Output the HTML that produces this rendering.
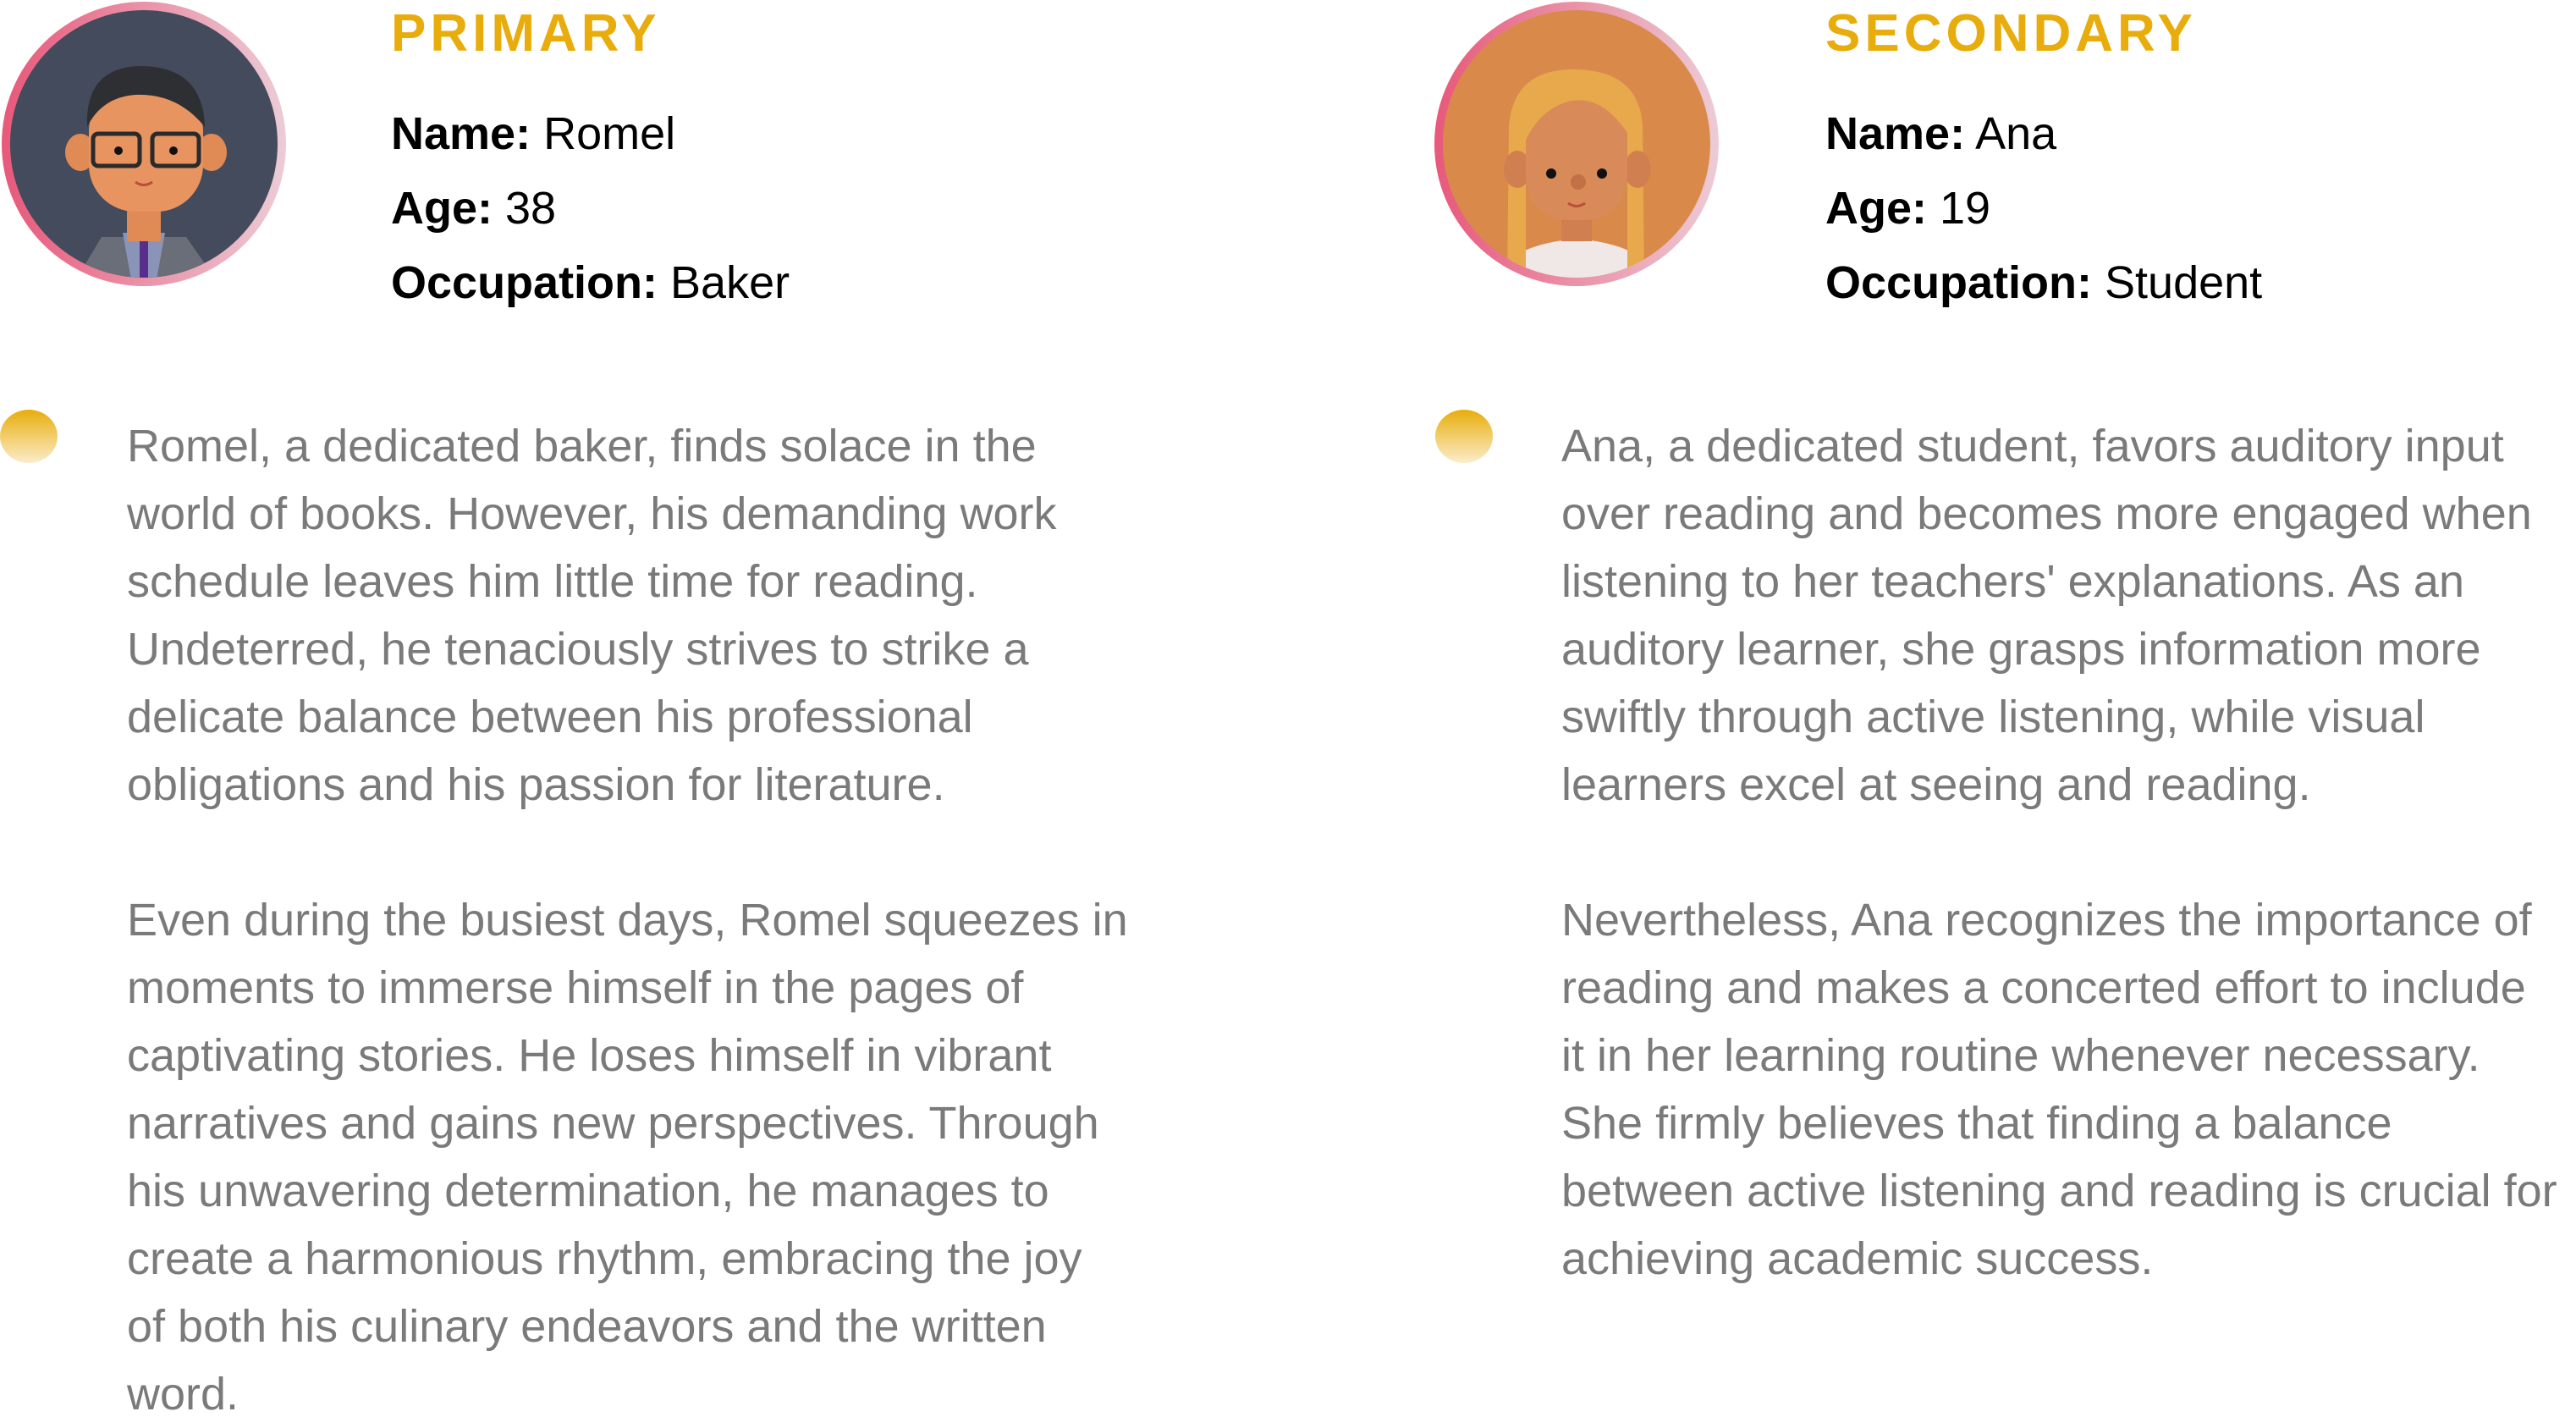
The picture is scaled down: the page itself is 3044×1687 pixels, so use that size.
<!DOCTYPE html>
<html><head><meta charset="utf-8"><style>
body{margin:0;width:3044px;height:1684px;background:#fff;position:relative;overflow:hidden;font-family:"Liberation Sans",sans-serif}
.h{position:absolute;font-size:62px;font-weight:bold;color:#e8ad0c;letter-spacing:5px;line-height:60px}
.info{position:absolute;font-size:54px;line-height:88px;color:#000;letter-spacing:0;white-space:nowrap}
.info b{font-weight:bold}
.body{position:absolute;font-size:54px;line-height:80px;color:#7a7a7a;letter-spacing:0;white-space:nowrap}
.dot{position:absolute;width:68px;height:63px;border-radius:50%;background:linear-gradient(#e8ad0c,#fbeccb)}
svg{position:absolute}
</style></head><body>

<svg style="left:0;top:0" width="340" height="340" viewBox="0 0 340 340">
<defs><linearGradient id="r1" x1="0" y1="0" x2="1" y2="0"><stop offset="0" stop-color="#e8587a"/><stop offset="1" stop-color="#ecccd6"/></linearGradient>
<clipPath id="c1"><circle cx="170" cy="170" r="158"/></clipPath></defs>
<circle cx="170" cy="170" r="168" fill="url(#r1)"/>
<circle cx="170" cy="170" r="158" fill="#434b5c"/>
<g clip-path="url(#c1)">
<path d="M90 330 L120 280 L220 280 L255 330 Z" fill="#6a6e78"/>
<path d="M145 275 L195 275 L185 330 L155 330 Z" fill="#8a94b8"/>
<rect x="165" y="285" width="10" height="45" fill="#5a2d8a"/>
<rect x="150" y="230" width="40" height="55" fill="#e08a55"/>
<ellipse cx="95" cy="180" rx="18" ry="22" fill="#e08a55"/>
<ellipse cx="250" cy="180" rx="18" ry="22" fill="#e08a55"/>
<rect x="105" y="100" width="135" height="150" rx="55" fill="#e89460"/>
<path d="M103 150 Q100 80 165 78 Q240 78 242 150 Q210 110 160 112 Q120 115 103 150Z" fill="#2d2f33"/>
<rect x="110" y="158" width="55" height="38" rx="6" fill="none" stroke="#2a2a2a" stroke-width="5"/>
<rect x="180" y="158" width="55" height="38" rx="6" fill="none" stroke="#2a2a2a" stroke-width="5"/>
<circle cx="140" cy="178" r="5" fill="#111"/><circle cx="205" cy="178" r="5" fill="#111"/>
<path d="M160 215 Q170 222 180 215" stroke="#b8503a" stroke-width="3" fill="none"/>
</g></svg>

<svg style="left:1693px;top:0" width="340" height="340" viewBox="0 0 340 340">
<defs><clipPath id="c2"><circle cx="170" cy="170" r="158"/></clipPath></defs>
<circle cx="170" cy="170" r="168" fill="url(#r1)"/>
<circle cx="170" cy="170" r="158" fill="#d98a4a"/>
<g clip-path="url(#c2)">
<path d="M80 330 Q85 290 170 282 Q255 290 260 330Z" fill="#efe8e6"/>
<path d="M90 150 Q95 80 170 82 Q245 84 248 150 L250 330 L230 330 L230 200 L110 200 L110 330 L88 330Z" fill="#e8a84c"/>
<rect x="152" y="230" width="36" height="55" fill="#d08050"/>
<ellipse cx="100" cy="200" rx="16" ry="22" fill="#d08050"/>
<ellipse cx="242" cy="200" rx="16" ry="22" fill="#d08050"/>
<rect x="110" y="110" width="120" height="150" rx="50" fill="#d88a58"/>
<path d="M108 170 Q110 95 175 92 Q232 95 232 160 Q200 110 160 120 Q125 130 108 170Z" fill="#e8a84c"/>
<circle cx="140" cy="205" r="6" fill="#111"/><circle cx="200" cy="205" r="6" fill="#111"/>
<circle cx="172" cy="215" r="9" fill="#c27045"/>
<path d="M160 240 Q170 247 180 240" stroke="#b8503a" stroke-width="3" fill="none"/>
</g></svg>

<div class="h" style="left:462px;top:10px">PRIMARY</div>
<div class="info" style="left:462px;top:114px"><b>Name:</b> Romel<br><b>Age:</b> 38<br><b>Occupation:</b> Baker</div>

<div class="h" style="left:2157px;top:10px">SECONDARY</div>
<div class="info" style="left:2157px;top:114px"><b>Name:</b> Ana<br><b>Age:</b> 19<br><b>Occupation:</b> Student</div>

<div class="dot" style="left:0;top:484px"></div>
<div class="dot" style="left:1696px;top:484px"></div>

<div class="body" style="left:150px;top:487px">Romel, a dedicated baker, finds solace in the<br>world of books. However, his demanding work<br>schedule leaves him little time for reading.<br>Undeterred, he tenaciously strives to strike a<br>delicate balance between his professional<br>obligations and his passion for literature.<br><br>Even during the busiest days, Romel squeezes in<br>moments to immerse himself in the pages of<br>captivating stories. He loses himself in vibrant<br>narratives and gains new perspectives. Through<br>his unwavering determination, he manages to<br>create a harmonious rhythm, embracing the joy<br>of both his culinary endeavors and the written<br>word.</div>

<div class="body" style="left:1845px;top:487px">Ana, a dedicated student, favors auditory input<br>over reading and becomes more engaged when<br>listening to her teachers' explanations. As an<br>auditory learner, she grasps information more<br>swiftly through active listening, while visual<br>learners excel at seeing and reading.<br><br>Nevertheless, Ana recognizes the importance of<br>reading and makes a concerted effort to include<br>it in her learning routine whenever necessary.<br>She firmly believes that finding a balance<br>between active listening and reading is crucial for<br>achieving academic success.</div>

</body></html>
